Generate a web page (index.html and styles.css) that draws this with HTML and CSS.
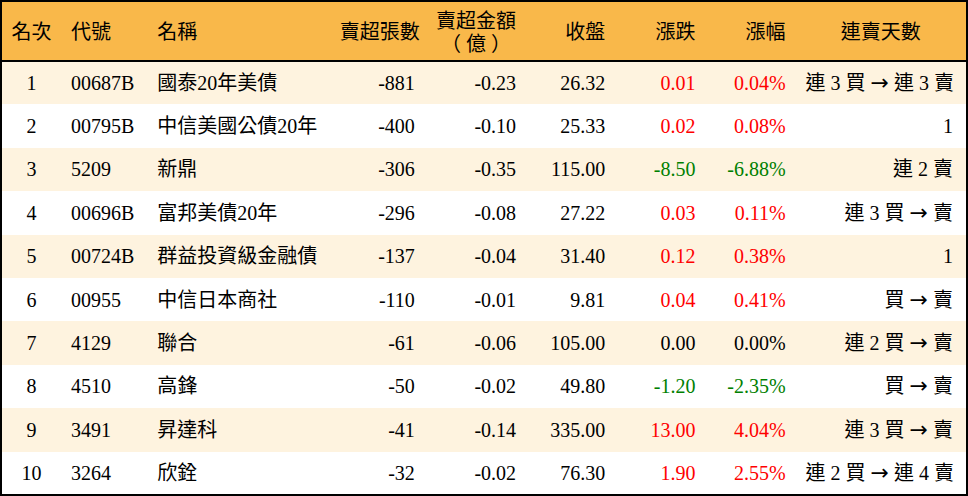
FILE: index.html
```html
<!DOCTYPE html>
<html lang="zh-Hant">
<head>
<meta charset="utf-8">
<link rel="stylesheet" href="styles.css">
</head>
<body>
<table class="rank">
  <colgroup>
    <col class="c-rank"><col class="c-code"><col class="c-name"><col class="c-vol"><col class="c-amt"><col class="c-close"><col class="c-chg"><col class="c-pct"><col class="c-days">
  </colgroup>
  <thead>
    <tr>
      <th class="ctr">名次</th>
      <th class="lft">代號</th>
      <th class="lft">名稱</th>
      <th class="rgt">賣超張數</th>
      <th class="rgt"><span class="two"><span class="line">賣超金額</span><span class="line unit">（億）</span></span></th>
      <th class="rgt">收盤</th>
      <th class="rgt">漲跌</th>
      <th class="rgt">漲幅</th>
      <th class="ctr">連賣天數</th>
    </tr>
  </thead>
  <tbody>
    <tr><td class="ctr">1</td><td class="lft">00687B</td><td class="lft">國泰20年美債</td><td class="rgt">-881</td><td class="rgt">-0.23</td><td class="rgt">26.32</td><td class="rgt up">0.01</td><td class="rgt up">0.04%</td><td class="rgt">連 3 買 <span class="arr">→</span> 連 3 賣</td></tr>
    <tr><td class="ctr">2</td><td class="lft">00795B</td><td class="lft">中信美國公債20年</td><td class="rgt">-400</td><td class="rgt">-0.10</td><td class="rgt">25.33</td><td class="rgt up">0.02</td><td class="rgt up">0.08%</td><td class="rgt">1</td></tr>
    <tr><td class="ctr">3</td><td class="lft">5209</td><td class="lft">新鼎</td><td class="rgt">-306</td><td class="rgt">-0.35</td><td class="rgt">115.00</td><td class="rgt down">-8.50</td><td class="rgt down">-6.88%</td><td class="rgt">連 2 賣</td></tr>
    <tr><td class="ctr">4</td><td class="lft">00696B</td><td class="lft">富邦美債20年</td><td class="rgt">-296</td><td class="rgt">-0.08</td><td class="rgt">27.22</td><td class="rgt up">0.03</td><td class="rgt up">0.11%</td><td class="rgt">連 3 買 <span class="arr">→</span> 賣</td></tr>
    <tr><td class="ctr">5</td><td class="lft">00724B</td><td class="lft">群益投資級金融債</td><td class="rgt">-137</td><td class="rgt">-0.04</td><td class="rgt">31.40</td><td class="rgt up">0.12</td><td class="rgt up">0.38%</td><td class="rgt">1</td></tr>
    <tr><td class="ctr">6</td><td class="lft">00955</td><td class="lft">中信日本商社</td><td class="rgt">-110</td><td class="rgt">-0.01</td><td class="rgt">9.81</td><td class="rgt up">0.04</td><td class="rgt up">0.41%</td><td class="rgt">買 <span class="arr">→</span> 賣</td></tr>
    <tr><td class="ctr">7</td><td class="lft">4129</td><td class="lft">聯合</td><td class="rgt">-61</td><td class="rgt">-0.06</td><td class="rgt">105.00</td><td class="rgt">0.00</td><td class="rgt">0.00%</td><td class="rgt">連 2 買 <span class="arr">→</span> 賣</td></tr>
    <tr><td class="ctr">8</td><td class="lft">4510</td><td class="lft">高鋒</td><td class="rgt">-50</td><td class="rgt">-0.02</td><td class="rgt">49.80</td><td class="rgt down">-1.20</td><td class="rgt down">-2.35%</td><td class="rgt">買 <span class="arr">→</span> 賣</td></tr>
    <tr><td class="ctr">9</td><td class="lft">3491</td><td class="lft">昇達科</td><td class="rgt">-41</td><td class="rgt">-0.14</td><td class="rgt">335.00</td><td class="rgt up">13.00</td><td class="rgt up">4.04%</td><td class="rgt">連 3 買 <span class="arr">→</span> 賣</td></tr>
    <tr><td class="ctr">10</td><td class="lft">3264</td><td class="lft">欣銓</td><td class="rgt">-32</td><td class="rgt">-0.02</td><td class="rgt">76.30</td><td class="rgt up">1.90</td><td class="rgt up">2.55%</td><td class="rgt">連 2 買 <span class="arr">→</span> 連 4 賣</td></tr>
  </tbody>
</table>
</body>
</html>
```

FILE: styles.css
```css
html, body {
  margin: 0;
  padding: 0;
  background: #ffffff;
}

.rank {
  width: 968px;
  height: 496px;
  border-collapse: collapse;
  table-layout: fixed;
  border: 2px solid #000;
  font-family: "Liberation Serif", "Noto Sans CJK TC", serif;
  font-size: 20px;
  color: #000;
}

.c-rank { width: 60px; }
.c-code { width: 86px; }
.c-name { width: 182px; }
.c-vol { width: 95px; }
.c-amt { width: 101px; }
.c-close { width: 89px; }
.c-chg { width: 90px; }
.c-pct { width: 90px; }
.c-days { width: 171px; }

.rank thead tr {
  height: 60px;
  background: #f9b84a;
  border-bottom: 2px solid #000;
}

.rank th {
  font-weight: normal;
  font-family: "Noto Sans CJK TC", sans-serif;
  line-height: 24px;
  padding: 0 10px;
  vertical-align: middle;
  white-space: nowrap;
}

.rank th:first-child {
  padding: 0;
}

.rank tbody tr {
  height: 43px;
}

.rank tbody tr:nth-child(odd) {
  background: #fef3df;
}

.rank td {
  padding: 0 10px;
  line-height: 24px;
  vertical-align: middle;
  white-space: nowrap;
}

.rank .ctr { text-align: center; }
.rank .lft { text-align: left; }
.rank .rgt { text-align: right; }

.rank td:last-child { padding-right: 13px; }

.two {
  display: inline-flex;
  flex-direction: column;
  align-items: center;
}

.line {
  display: block;
  line-height: 23px;
}

.unit {
  letter-spacing: 5px;
  padding-left: 5px;
}

.arr {
  font-family: "DejaVu Sans", sans-serif;
  font-size: 22px;
  line-height: 20px;
}

.up { color: #ff0000; }
.down { color: #008000; }
```
